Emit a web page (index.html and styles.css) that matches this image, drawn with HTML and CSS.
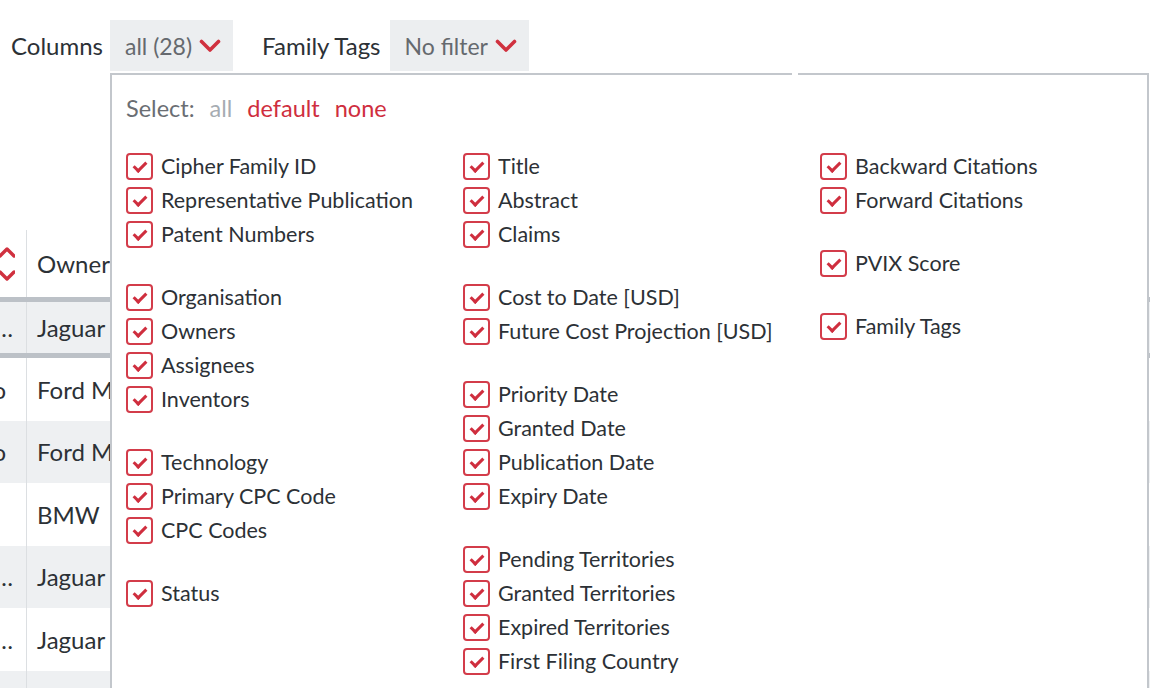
FILE: index.html
```html
<!DOCTYPE html>
<html lang="en">
<head>
<meta charset="utf-8">
<title>Columns</title>
<link rel="stylesheet" href="styles.css">
</head>
<body>
<div class="page">
  <div class="toolbar">
    <span class="label">Columns</span>
    <button class="select-btn">all (28) <svg class="chev" viewBox="0 0 22 14"><path d="M2.5 2.5 L11 11 L19.5 2.5"/></svg></button>
    <span class="label label-gap">Family Tags</span>
    <button class="select-btn">No filter <svg class="chev" viewBox="0 0 22 14"><path d="M2.5 2.5 L11 11 L19.5 2.5"/></svg></button>
  </div>

  <div class="table">
    <div class="row head">
      <div class="cell c1"><span class="sort"><svg viewBox="0 0 16 36"><path d="M1 10 L8 3 L15 10"/><path d="M1 26 L8 33 L15 26"/></svg></span></div>
      <div class="cell c2">Owners</div>
    </div>
    <div class="row alt sel">
      <div class="cell c1"><span>Jaguar Land Rover…</span></div>
      <div class="cell c2">Jaguar</div>
    </div>
    <div class="row">
      <div class="cell c1 cut"><span>Ford Mo</span></div>
      <div class="cell c2">Ford Mo</div>
    </div>
    <div class="row alt">
      <div class="cell c1 cut"><span>Ford Mo</span></div>
      <div class="cell c2">Ford Mo</div>
    </div>
    <div class="row">
      <div class="cell c1"></div>
      <div class="cell c2">BMW</div>
    </div>
    <div class="row alt">
      <div class="cell c1"><span>Jaguar Land Rover…</span></div>
      <div class="cell c2">Jaguar</div>
    </div>
    <div class="row">
      <div class="cell c1"><span>Jaguar Land Rover…</span></div>
      <div class="cell c2">Jaguar</div>
    </div>
    <div class="row alt">
      <div class="cell c1"></div>
      <div class="cell c2"></div>
    </div>
  </div>

  <div class="popup">
    <div class="select-line">
      <span class="sel-label">Select:</span>
      <span class="sel-all">all</span>
      <span class="sel-red">default</span>
      <span class="sel-red">none</span>
    </div>
    <div class="cols">
      <div class="col col1">
        <div class="group">
          <label class="item"><span class="box"></span>Cipher Family ID</label>
          <label class="item"><span class="box"></span>Representative Publication</label>
          <label class="item"><span class="box"></span>Patent Numbers</label>
        </div>
        <div class="group">
          <label class="item"><span class="box"></span>Organisation</label>
          <label class="item"><span class="box"></span>Owners</label>
          <label class="item"><span class="box"></span>Assignees</label>
          <label class="item"><span class="box"></span>Inventors</label>
        </div>
        <div class="group">
          <label class="item"><span class="box"></span>Technology</label>
          <label class="item"><span class="box"></span>Primary CPC Code</label>
          <label class="item"><span class="box"></span>CPC Codes</label>
        </div>
        <div class="group">
          <label class="item"><span class="box"></span>Status</label>
        </div>
      </div>
      <div class="col col2">
        <div class="group">
          <label class="item"><span class="box"></span>Title</label>
          <label class="item"><span class="box"></span>Abstract</label>
          <label class="item"><span class="box"></span>Claims</label>
        </div>
        <div class="group">
          <label class="item"><span class="box"></span>Cost to Date [USD]</label>
          <label class="item"><span class="box"></span>Future Cost Projection [USD]</label>
        </div>
        <div class="group">
          <label class="item"><span class="box"></span>Priority Date</label>
          <label class="item"><span class="box"></span>Granted Date</label>
          <label class="item"><span class="box"></span>Publication Date</label>
          <label class="item"><span class="box"></span>Expiry Date</label>
        </div>
        <div class="group">
          <label class="item"><span class="box"></span>Pending Territories</label>
          <label class="item"><span class="box"></span>Granted Territories</label>
          <label class="item"><span class="box"></span>Expired Territories</label>
          <label class="item"><span class="box"></span>First Filing Country</label>
        </div>
      </div>
      <div class="col col3">
        <div class="group">
          <label class="item"><span class="box"></span>Backward Citations</label>
          <label class="item"><span class="box"></span>Forward Citations</label>
        </div>
        <div class="group">
          <label class="item"><span class="box"></span>PVIX Score</label>
        </div>
        <div class="group">
          <label class="item"><span class="box"></span>Family Tags</label>
        </div>
      </div>
    </div>
  </div>
</div>
</body>
</html>
```

FILE: styles.css
```css
* { box-sizing: border-box; }

html, body {
  margin: 0;
  padding: 0;
  background: #ffffff;
  overflow: hidden;
}

body {
  font-family: "Lato", "Liberation Sans", sans-serif;
  font-size: 24px;
  color: #2c3136;
  width: 1150px;
  height: 688px;
}

.page {
  position: relative;
  width: 1150px;
  height: 688px;
  overflow: hidden;
}

/* toolbar */
.toolbar {
  display: flex;
  align-items: center;
  padding: 20px 0 0 11px;
  height: 71px;
  font-size: 24px;
}

.label {
  color: #2c3136;
  margin-right: 7px;
}

.label-gap {
  margin-left: 29px;
  margin-right: 9px;
}

.select-btn {
  font: inherit;
  font-size: 23px;
  color: #65696e;
  background: #eceef0;
  border: none;
  height: 51px;
  padding: 0 12px 0 15px;
  display: flex;
  align-items: center;
  gap: 7px;
}

.chev {
  width: 22px;
  height: 14px;
  fill: none;
  stroke: #d0313f;
  stroke-width: 3.6;
  stroke-linecap: round;
  stroke-linejoin: round;
}

/* table beneath */
.table {
  margin-top: 159px;
  width: 1150px;
  font-size: 24px;
}

.row {
  display: flex;
  height: 62.5px;
}

.row.head {
  height: 72px;
  border-bottom: 5px solid #bcc1c7;
}

.row.alt { background: #eef0f2; }

.row.sel {
  height: 56px;
  border-bottom: 5px solid #bcc1c7;
}

.cell {
  display: flex;
  align-items: center;
  white-space: nowrap;
  overflow: hidden;
}

.c1 {
  width: 27px;
  border-right: 1px solid #dcdfe2;
  justify-content: flex-end;
  padding-right: 13px;
  color: #2c3136;
}

.c1.cut { padding-right: 20px; }

.c2 {
  flex: 1;
  padding-left: 10px;
}

.sort {
  display: flex;
  margin-right: -2px;
}

.sort svg {
  width: 16px;
  height: 38px;
  fill: none;
  stroke: #d0313f;
  stroke-width: 3.4;
  stroke-linecap: round;
  stroke-linejoin: round;
}

/* popup */
.popup {
  position: absolute;
  left: 110px;
  top: 73px;
  width: 1039px;
  height: 680px;
  background: #ffffff;
  border: 2px solid #c3c7cc;
  padding: 21px 0 0 14px;
}

.popup::before {
  content: "";
  position: absolute;
  top: -2px;
  left: 680px;
  width: 6px;
  height: 2px;
  background: #ffffff;
}

.select-line {
  display: flex;
  gap: 15px;
  height: 24px;
  align-items: center;
  font-size: 23.5px;
}

.sel-label { color: #6a6e73; }
.sel-all { color: #a6acb2; }
.sel-red { color: #cf2e3e; }

.cols {
  display: grid;
  grid-template-columns: 337px 357px 1fr;
  margin-top: 29px;
  font-size: 21.5px;
}

.col {
  display: flex;
  flex-direction: column;
  gap: 29px;
}

.group {
  display: flex;
  flex-direction: column;
}

.item {
  display: flex;
  align-items: center;
  gap: 8px;
  height: 34px;
  color: #2c3136;
  white-space: nowrap;
}

.box {
  width: 27px;
  height: 27px;
  flex: none;
  border: 2px solid #d33c4a;
  border-radius: 4px;
  position: relative;
  background: #fff;
}

.box::after {
  content: "";
  position: absolute;
  left: 8px;
  top: 4px;
  width: 5px;
  height: 10px;
  border-right: 3px solid #cf2e3e;
  border-bottom: 3px solid #cf2e3e;
  transform: rotate(45deg);
  transform-origin: center;
}
```
